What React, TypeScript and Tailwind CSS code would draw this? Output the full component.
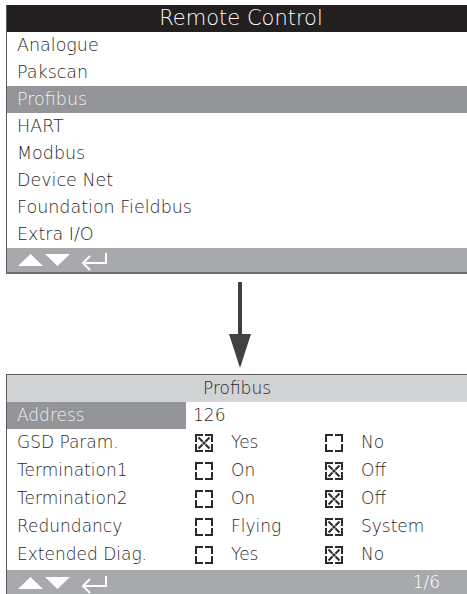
const topItems = [
  'Analogue',
  'Pakscan',
  'Profibus',
  'HART',
  'Modbus',
  'Device Net',
  'Foundation Fieldbus',
  'Extra I/O',
];

interface Option {
  label: string;
  a: string;
  b: string;
  checked: 'a' | 'b';
}

const options: Option[] = [
  { label: 'GSD Param.', a: 'Yes', b: 'No', checked: 'a' },
  { label: 'Termination1', a: 'On', b: 'Off', checked: 'b' },
  { label: 'Termination2', a: 'On', b: 'Off', checked: 'b' },
  { label: 'Redundancy', a: 'Flying', b: 'System', checked: 'b' },
  { label: 'Extended Diag.', a: 'Yes', b: 'No', checked: 'b' },
];

const Box = ({ checked }: { checked: boolean }) => (
  <svg width="18" height="18" viewBox="0 0 18 18" fill="none" stroke="#2b2b2b" strokeWidth="2">
    <path d="M1 8V1h7M10 1h7v7M17 10v7h-7M8 17H1v-7" />
    {checked && (
      <>
        <path d="M3.5 3.5l4 4M14.5 3.5l-4 4M3.5 14.5l4-4M14.5 14.5l-4-4" />
        <rect x="7.5" y="7.5" width="3" height="3" fill="#2b2b2b" stroke="none" />
      </>
    )}
  </svg>
);

const NavIcons = () => (
  <div className="flex items-center">
    <svg width="52" height="14" viewBox="0 0 52 14" fill="#fff">
      <polygon points="0,13 12.5,1 25,13" />
      <polygon points="27,1 52,1 39.5,13" />
    </svg>
    <svg width="28" height="20" viewBox="0 0 28 20" fill="none" stroke="#fff" strokeWidth="2" className="ml-[10px] mt-[4px]">
      <path d="M26 1v10H3" />
      <path d="M10 4l-7 7 7 7" />
    </svg>
  </div>
);

export default function App() {
  return (
    <div
      className="w-[467px] h-[594px] bg-white overflow-hidden text-[#2a2728] pt-[5px] font-extralight"
      style={{ fontFamily: '"DejaVu Sans", "Liberation Sans", sans-serif' }}
    >
      {/* top screen */}
      <div className="ml-[6px] border-l border-[#58595b] border-b-2 border-b-[#6d6e71]">
        <div className="h-[27px] bg-[#231f20] text-white text-[21px] flex items-center justify-center pl-[8px]">
          Remote Control
        </div>
        {topItems.map((item) => (
          <div
            key={item}
            className={`h-[27px] flex items-center pl-[10px] text-[17.5px] ${
              item === 'Profibus' ? 'bg-[#939598] text-[#f1f1f2]' : ''
            }`}
          >
            {item}
          </div>
        ))}
        <div className="h-[24px] bg-[#a7a9ac] flex items-center pl-[11px]">
          <NavIcons />
        </div>
      </div>

      {/* arrow */}
      <div className="h-[100px] flex justify-center items-start pt-[8px] pl-[12px]">
        <svg width="24" height="86" viewBox="0 0 24 86" fill="#414042">
          <rect x="10" y="0" width="4" height="62" />
          <polygon points="1,52 23,52 12,86" />
        </svg>
      </div>

      {/* bottom screen */}
      <div className="ml-[6px] border-l border-t border-[#58595b]">
        <div className="h-[27px] bg-[#d1d3d4] text-[17px] flex items-center justify-center">
          Profibus
        </div>
        <div className="h-[27px] flex items-center text-[17px]">
          <div className="w-[179px] h-full bg-[#939598] text-[#f1f1f2] flex items-center pl-[10px]">
            Address
          </div>
          <div className="pl-[7px]">126</div>
        </div>
        {options.map((o) => (
          <div key={o.label} className="h-[28px] flex items-center text-[17px]">
            <div className="w-[179px] pl-[10px]">{o.label}</div>
            <div className="w-[129px] flex items-center pl-[9px]">
              <Box checked={o.checked === 'a'} />
              <span className="ml-[18px]">{o.a}</span>
            </div>
            <div className="flex items-center pl-[10px]">
              <Box checked={o.checked === 'b'} />
              <span className="ml-[18px]">{o.b}</span>
            </div>
          </div>
        ))}
        <div className="h-[25px] bg-[#a7a9ac] flex items-center justify-between pl-[11px] pr-[27px] mt-[1px]">
          <NavIcons />
          <span className="text-white text-[17px]">1/6</span>
        </div>
      </div>
    </div>
  );
}
